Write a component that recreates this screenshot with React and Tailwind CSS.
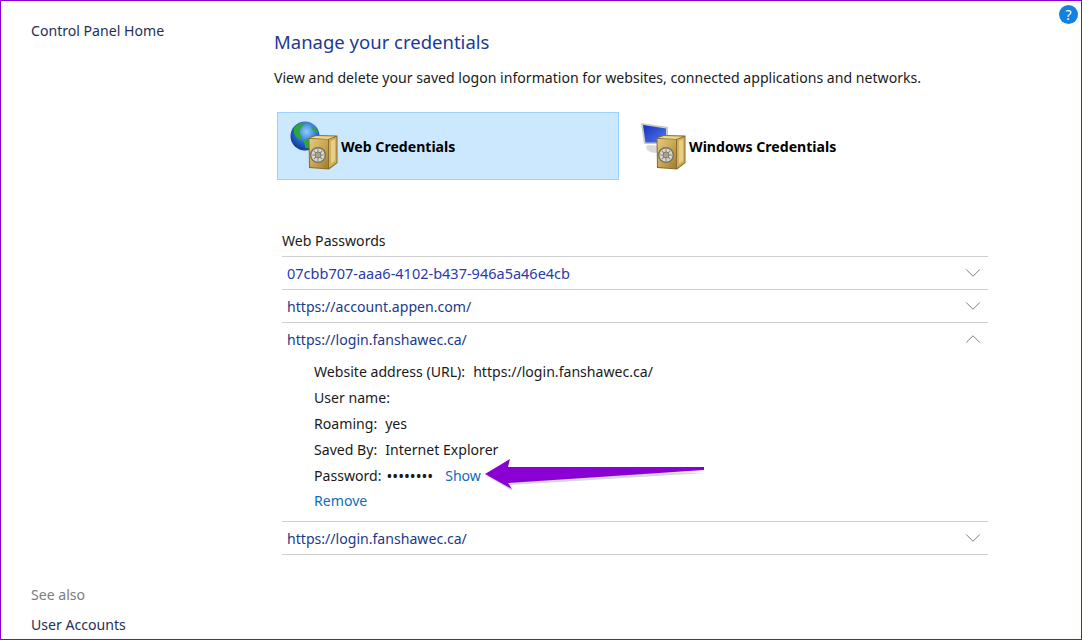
import React from 'react';
import { ChevronDown, ChevronUp } from 'lucide-react';

const Safe = ({ className, id }) => (
  <svg viewBox="0 0 30 36" className={className}>
    <defs>
      <linearGradient id={id} x1="0" y1="0" x2="1" y2="1">
        <stop offset="0" stopColor="#e4cb7e" />
        <stop offset="0.55" stopColor="#c6a44f" />
        <stop offset="1" stopColor="#a07d30" />
      </linearGradient>
    </defs>
    <path d="M0.5 4 L7 1 L29.5 1.5 L29.5 29 L21 35.5 L1 34 Z" fill="#8a6c2a" />
    <path d="M2 4 L8 2 L27 2.5 L20 5 Z" fill="#ecd895" />
    <path d="M1.5 5 L20 5.5 L20 34.5 L2 33 Z" fill={`url(#${id})`} />
    <path d="M21 5.5 L28.5 3 L28.5 28.5 L21 34 Z" fill="#cfb05f" />
    <path d="M23 7 L27 5.5 L27 26.5 L23 29.5 Z" fill="#e6d084" />
    <circle cx="10" cy="21" r="8" fill="#77735f" />
    <circle cx="10" cy="21" r="6.6" fill="#d9d7cc" />
    <path d="M10 15 V27 M4 21 H16 M5.8 16.8 L14.2 25.2 M14.2 16.8 L5.8 25.2" stroke="#8c887a" strokeWidth="1.1" />
    <circle cx="10" cy="21" r="3" fill="#a5a294" stroke="#6f6b5a" strokeWidth="0.7" />
  </svg>
);

const WebIcon = () => (
  <div className="relative w-[50px] h-[50px] shrink-0">
    <svg viewBox="0 0 30 30" className="absolute left-0 top-0 w-[30px] h-[30px]">
      <defs>
        <radialGradient id="globe" cx="0.55" cy="0.35" r="0.7">
          <stop offset="0" stopColor="#8fd0fb" />
          <stop offset="0.6" stopColor="#1f63cf" />
          <stop offset="1" stopColor="#12307e" />
        </radialGradient>
      </defs>
      <circle cx="15" cy="15" r="14.5" fill="url(#globe)" />
      <path d="M4 7 C8 2 14 1 15 3 C13 6 10 6 10 10 C9 14 13 14 11 18 C7 18 3 14 4 7 Z" fill="#2fa63a" />
      <path d="M14 19 C18 17 23 20 25 22 C22 26 18 28 15 27 C16 24 13 22 14 19 Z" fill="#2fa63a" />
      <path d="M21 5 C24 6 27 9 28 12 C25 12 22 9 21 5 Z" fill="#2fa63a" />
    </svg>
    <Safe id="safeWeb" className="absolute left-[18px] top-[13px] w-[30px] h-[36px]" />
  </div>
);

const WindowsIcon = () => (
  <div className="relative w-[50px] h-[50px] shrink-0">
    <svg viewBox="0 0 30 32" className="absolute left-[2px] top-[2px] w-[30px] h-[32px]">
      <defs>
        <linearGradient id="screen" x1="0" y1="0" x2="1" y2="1">
          <stop offset="0" stopColor="#1a2fb8" />
          <stop offset="1" stopColor="#4d7cf0" />
        </linearGradient>
      </defs>
      <path d="M1 0 L28 4 L28 21 L4 21 Z" fill="#c4c8cf" />
      <path d="M3 2 L26 5.5 L26 19.5 L5.5 19.5 Z" fill="url(#screen)" />
      <path d="M7 22 C5 26 7 29 16 30 L22 28 L22 23 Z" fill="#d8dade" />
    </svg>
    <Safe id="safeWin" className="absolute left-[18px] top-[13px] w-[30px] h-[36px]" />
  </div>
);

const Row = ({ label, open, children, linkColor = 'text-[#1a3a8c]', labelClass = 'mt-[2px]' }) => (
  <div className="border-b border-[#cfcfcf]">
    <div className="h-[32px] flex items-center justify-between pl-[5px] pr-[2px]">
      <span className={`${linkColor} ${labelClass}`}>{label}</span>
      {open
        ? <ChevronUp className="w-[26px] h-[26px] text-[#7a7a7a]" strokeWidth={0.9} />
        : <ChevronDown className="w-[26px] h-[26px] text-[#7a7a7a]" strokeWidth={0.9} />}
    </div>
    {children}
  </div>
);

export default function App() {
  return (
    <div className="relative h-[640px] w-[1082px] border border-[#8a00d4] bg-white flex overflow-hidden text-[14.1px] leading-[20px] text-[#1a1a1a] [font-family:'Noto_Sans',sans-serif]">
      <aside className="w-[273px] shrink-0 pl-[30px] pt-[20px] pb-[4px] flex flex-col justify-between">
        <a className="text-[#1f2f57]">Control Panel Home</a>
        <div className="flex flex-col gap-[10px]">
          <span className="text-[#7d7d7d]">See also</span>
          <a className="text-[#1f2f57]">User Accounts</a>
        </div>
      </aside>

      <main className="flex-1 pt-[27px]">
        <h1 className="text-[18.5px] leading-[28px] text-[#1c3a94]">Manage your credentials</h1>
        <p className="mt-[12px]">View and delete your saved logon information for websites, connected applications and networks.</p>

        <div className="flex mt-[24px] ml-[3px] gap-[6px]">
          <div className="w-[342px] h-[68px] border border-[#99d1ff] bg-[#cce8ff] flex items-center pl-[12px] gap-[1px]">
            <WebIcon />
            <span className="mt-[2px] font-bold text-black">Web Credentials</span>
          </div>
          <div className="w-[342px] h-[68px] border border-transparent flex items-center pl-[12px] gap-[1px]">
            <WindowsIcon />
            <span className="mt-[2px] font-bold text-black">Windows Credentials</span>
          </div>
        </div>

        <section className="mt-[50px] ml-[8px] w-[706px]">
          <h2 className="pt-[1px] pb-[5px] border-b border-[#cfcfcf]">Web Passwords</h2>
          <Row label="07cbb707-aaa6-4102-b437-946a5a46e4cb" linkColor="text-[#2a3aa8]" labelClass="text-[14.5px]" />
          <Row label="https://account.appen.com/" />
          <Row label="https://login.fanshawec.ca/" open>
            <div className="pl-[32px] pt-[4px] pb-[9px] flex flex-col">
              <div className="h-[26px] flex items-center gap-[8px]"><span>Website address (URL):</span><span>https://login.fanshawec.ca/</span></div>
              <div className="h-[26px] flex items-center">User name:</div>
              <div className="h-[26px] flex items-center gap-[8px]"><span>Roaming:</span><span>yes</span></div>
              <div className="h-[26px] flex items-center gap-[8px]"><span>Saved By:</span><span>Internet Explorer</span></div>
              <div className="h-[26px] flex items-center gap-[8px]">
                <span>Password:</span>
                <span className="-ml-[3px] text-[15.5px]">••••••••</span>
                <a className="ml-[4px] text-[#0f6cbd]">Show</a>
              </div>
              <div className="h-[23px] flex items-center"><a className="text-[#0f6cbd]">Remove</a></div>
            </div>
          </Row>
          <Row label="https://login.fanshawec.ca/" />
        </section>
      </main>

      <svg viewBox="0 0 224 36" className="absolute left-[483px] top-[456px] w-[224px] h-[36px]">
        <path d="M3 19 L28 34 L26 28 L221 16 L26 12 Z" fill="#8a8a8a" opacity="0.35" />
        <path d="M1 17 L26 2 L24 10 L220 10 L220 13 L24 26 L28 32 Z" fill="#8a00d4" />
      </svg>

      <div className="absolute right-[3px] top-[4px] w-[19px] h-[19px] rounded-full bg-[#1182e0] text-white flex items-center justify-center text-[14px]">?</div>
    </div>
  );
}
